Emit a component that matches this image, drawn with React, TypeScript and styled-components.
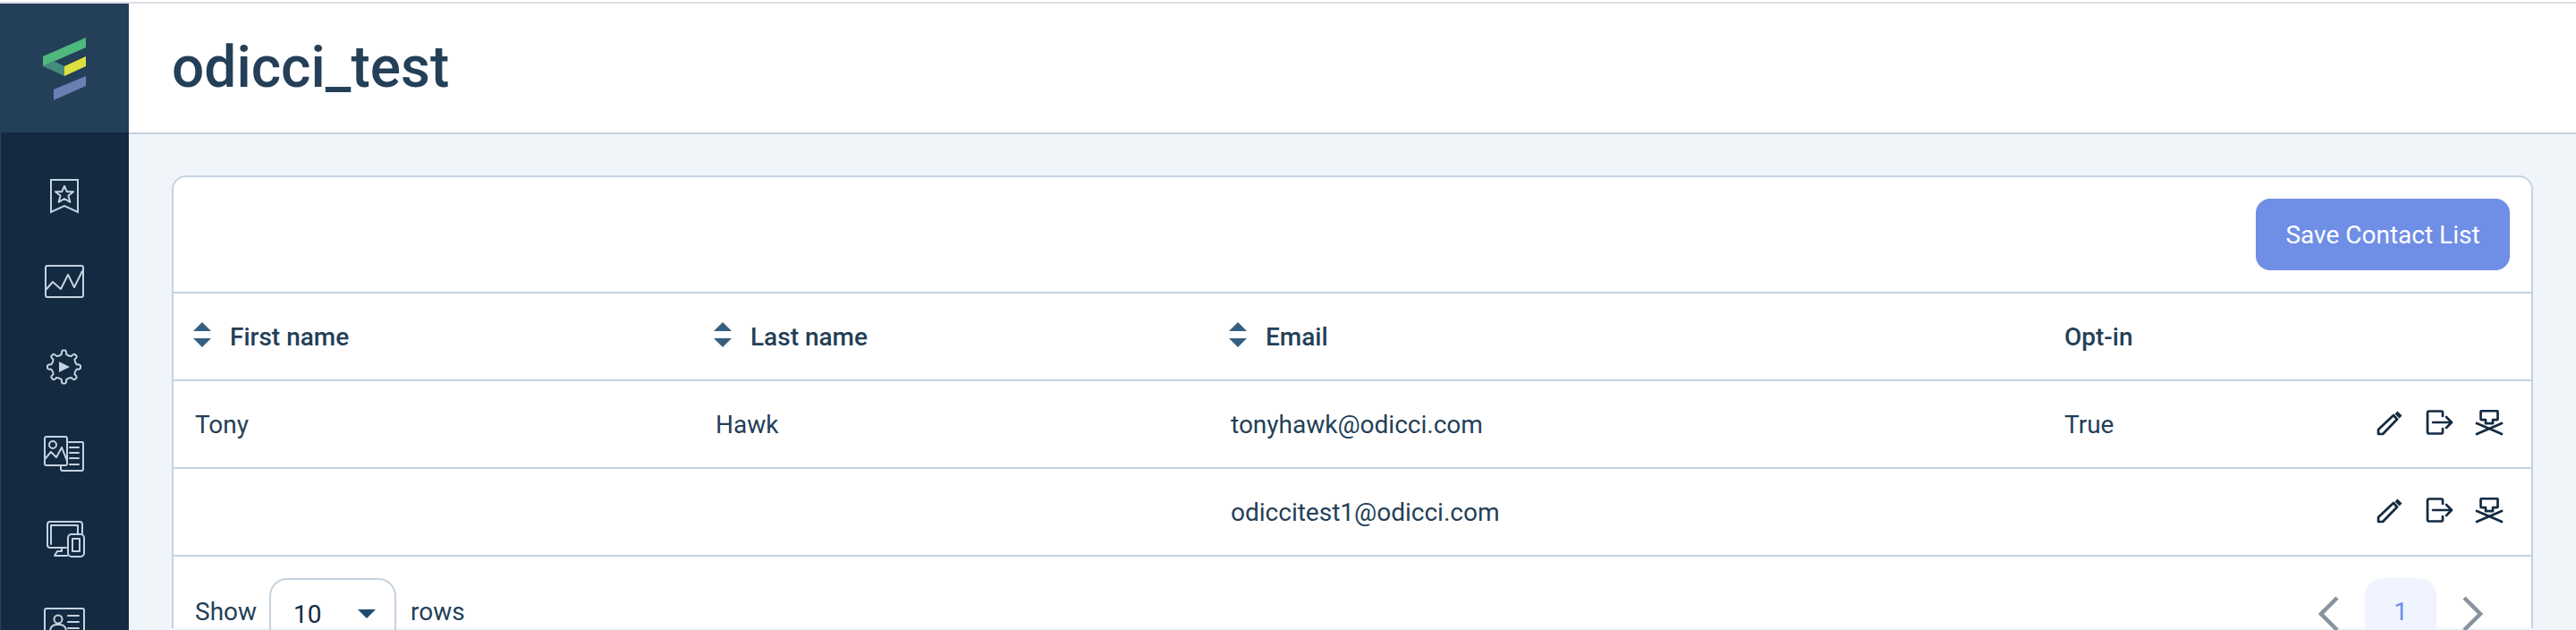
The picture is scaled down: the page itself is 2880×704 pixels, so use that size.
import React from "react";
import styled, { createGlobalStyle } from "styled-components";

const Global = createGlobalStyle`
  html, body { margin: 0; padding: 0; height: 704px; overflow: hidden; background: #f0f5fa; }
  * { box-sizing: border-box; }
  body { font-family: Roboto, "Liberation Sans", sans-serif; color: #243f58; }
`;
const Page = styled.div`
  height: 704px; overflow: hidden; display: flex; flex-direction: column;
`;
const TopLine = styled.div`height: 4px; background: linear-gradient(#fff 0 2px, #dcdde4 2px); flex: none;`;
const Body = styled.div`flex: 1; display: flex; min-height: 0;`;
const Sidebar = styled.aside`
  width: 144px; flex: none; background: #132a41;
  display: flex; flex-direction: column; overflow: hidden;
  box-shadow: inset 1px 0 0 #2a4259;
`;
const LogoBox = styled.div`
  height: 144px; flex: none; background: #243f58; display: flex; align-items: center; justify-content: center;
`;
const LogoMark = styled.svg`width: 48px; height: 70px; margin-top: 2px;`;
const NavList = styled.nav`
  display: flex; flex-direction: column; align-items: center; gap: 48px; padding-top: 46px;
`;
const NavIcon = styled.svg`
  width: 48px; height: 48px; flex: none; fill: none; stroke: #c5d2e0; stroke-width: 2;
  stroke-linejoin: round; stroke-linecap: round;
`;
const Main = styled.main`flex: 1; min-width: 0; display: flex; flex-direction: column;`;
const Header = styled.header`
  height: 146px; flex: none; background: #fff; border-bottom: 2px solid #c5d2e0;
  display: flex; align-items: center; padding-left: 48px;
`;
const Title = styled.h1`margin: 0; font-size: 64px; font-weight: 500; color: #243f58; line-height: 72px;`;
const Content = styled.div`flex: 1; padding: 46px 48px 0 48px; background: #f0f5fa;`;
const Card = styled.section`
  background: #fff; border: 2px solid #c5d2e0; border-radius: 16px 16px 0 0; border-bottom: none;
`;
const Toolbar = styled.div`
  height: 130px; display: flex; justify-content: flex-end; align-items: flex-start; padding: 24px 24px 0 0;
  border-bottom: 2px solid #c5d2e0;
`;
const SaveButton = styled.button`
  width: 284px; height: 80px; background: #6f8ee6; color: #fff; border: none; border-radius: 16px;
  font: 400 28px Roboto, sans-serif;
`;
const Row = styled.div`
  display: grid; grid-template-columns: 582px 576px 932px 1fr; height: 98px; align-items: center;
  border-bottom: 2px solid #c5d2e0; padding-left: 24px; font-size: 28px; color: #243f58;
`;
const HeadCell = styled.div<{ $sorted?: boolean }>`
  display: flex; align-items: center; gap: 21px; font-weight: 500; font-size: 28px;
  margin-left: ${p => (p.$sorted ? -2 : 0)}px;
`;
const BodyCell = styled.div``;
const Actions = styled.div`
  display: flex; justify-content: flex-end; align-items: center; gap: 24px; padding-right: 31px;
`;
const ActionsRowCell = styled.div`display: grid; grid-template-columns: 1fr auto; align-items: center;`;
const Footer = styled.div`display: flex; justify-content: space-between; padding: 24px 54px 0 24px; height: 80px;`;
const RowsPicker = styled.div`display: flex; align-items: flex-start; gap: 16px; font-size: 28px;`;
const PickerLabel = styled.span`line-height: 76px; color: #243f58;`;
const Select = styled.div`
  width: 142px; height: 80px; border: 2px solid #c5d2e0; border-radius: 20px;
  display: flex; justify-content: space-between; align-items: center; padding: 0 21px 0 25px;
  font-size: 28px; color: #132a41; margin-left: -2px;
`;
const Caret = styled.span`
  width: 0; height: 0; border-left: 10px solid transparent; border-right: 10px solid transparent;
  border-top: 10px solid #1f4b6b;
`;
const Pager = styled.div`display: flex; align-items: flex-start; gap: 28px;`;
const PageNum = styled.div`
  width: 80px; height: 80px; background: #f0f4fe; border-radius: 20px; color: #6f8ee6;
  display: flex; align-items: center; justify-content: center; font-size: 28px; padding-bottom: 6px;
`;
const Chevron = styled.svg`
  width: 24px; height: 48px; margin-top: 16px; flex: none; fill: none; stroke: #87939e; stroke-width: 4.500;
`;

const Logo = () => (
  <LogoMark viewBox="0 0 48 70">
    <polygon points="0,21 48,0 48,11 0,32" fill="#4fb87c" />
    <polygon points="0,32 12,26.300 24,32 24,43" fill="#458c7c" />
    <polygon points="24,32 48,21 48,32 24,43" fill="#dbe03f" />
    <polygon points="12,58 48,43 48,54 12,70" fill="#6b7fb3" />
  </LogoMark>
);

const gearPath = (() => {
  const cx = 23.5, cy = 24, teeth = 8, ro = 18.5, ri = 14.5;
  const pt = (r: number, a: number) => `${(cx + r * Math.cos(a)).toFixed(2)} ${(cy + r * Math.sin(a)).toFixed(2)}`;
  let d = "";
  for (let i = 0; i < teeth; i++) {
    const s = (Math.PI * 2) / teeth;
    const a = i * s - Math.PI / 2;
    const w = s * 0.2;
    const v = s * 0.5;
    d += `${i === 0 ? "M" : "L"}${pt(ri, a - w * 1.15)} Q${pt(ro + 1, a - w)} ${pt(ro, a)} Q${pt(ro + 1, a + w)} ${pt(ri, a + w * 1.15)} Q${pt(ri - 1.5, a + v)} ${pt(ri, a + s - w * 1.15)} `;
  }
  return d + "Z";
})();

const IconBookmark = () => (
  <NavIcon viewBox="0 0 48 48">
    <path d="M9 7h30v36l-15-7-15 7z" strokeLinejoin="miter" />
    <path d="M24 14l2.800 6.200h7.200l-5.600 4.600 2 7-6.400-3.800-6.400 3.800 2-7-5.600-4.600h7.200z" />
  </NavIcon>
);
const IconChart = () => (
  <NavIcon viewBox="0 0 48 48">
    <rect x="3" y="7" width="42" height="35" rx="2" />
    <path d="M4 33l7-8 9 8 8-16 7 14 9-18" />
  </NavIcon>
);
const IconGear = () => (
  <NavIcon viewBox="0 0 48 48">
    <path d={gearPath} />
    <polygon points="18,18 30,24 18,30" fill="#c5d2e0" stroke="none" />
  </NavIcon>
);
const IconMedia = () => (
  <NavIcon viewBox="0 0 48 48">
    <rect x="2" y="6" width="25" height="32" rx="2" />
    <circle cx="11" cy="15" r="4" />
    <path d="M3 30l6-7 6 6 6-11 6 15" />
    <path d="M29 12h15a1 1 0 0 1 1 1v29a2 2 0 0 1-2 2H22a2 2 0 0 1-2-2v-4M30 18h10M30 24h10M30 30h10M30 37h10" />
  </NavIcon>
);
const IconDevices = () => (
  <NavIcon viewBox="0 0 48 48">
    <path d="M44 18V8a3 3 0 0 0-3-3H8a3 3 0 0 0-3 3v23a3 3 0 0 0 3 3h18M9 30V9h30v9M21 34v4h-5l-3 5h14" />
    <rect x="28" y="19" width="18" height="25" rx="4" />
    <rect x="33" y="24" width="8" height="14" />
  </NavIcon>
);
const IconContact = () => (
  <NavIcon viewBox="0 0 48 48">
    <rect x="2" y="6" width="44" height="36" rx="2" />
    <circle cx="17" cy="18" r="4.500" />
    <path d="M8 38v-7a7 7 0 0 1 7-7h4a7 7 0 0 1 7 7v7M28 14h12M28 21h12M28 28h12" />
  </NavIcon>
);

const ActionIcon = styled.svg`
  width: 32px; height: 32px; flex: none; fill: none; stroke: #132a41; stroke-width: 2.700;
  stroke-linejoin: round; stroke-linecap: round;
`;
const IconPencil = () => (
  <ActionIcon viewBox="0 0 32 32">
    <path d="M4 22L21 6l4 4.500L9 27H4z" />
    <path d="M24 3l5 5" strokeWidth={4} strokeLinecap="butt" />
  </ActionIcon>
);
const IconExit = () => (
  <ActionIcon viewBox="0 0 32 32">
    <path d="M20 7V3a1.500 1.500 0 0 0-1.500-1.500H4.500A1.500 1.500 0 0 0 3 3v22a1.500 1.500 0 0 0 1.500 1.500h14A1.500 1.500 0 0 0 20 25v-4" />
    <path d="M9 14h20M24 8l6 6-6 6" />
  </ActionIcon>
);
const IconChair = () => (
  <ActionIcon viewBox="0 0 32 32">
    <path d="M7.500 1.200h17a1 1 0 0 1 1 1v8a1 1 0 0 1-1 1h-4.500v4h-8v-4H7.500a1 1 0 0 1-1-1v-8a1 1 0 0 1 1-1z" />
    <path d="M2 27L30 15M2 15l28 12" />
  </ActionIcon>
);

const SortWrap = styled.svg`width: 20px; height: 28px; flex: none; margin-top: -4px;`;
const Sort = () => (
  <SortWrap viewBox="0 0 20 28">
    <polygon points="10,0 20,10 0,10" fill="#365f7f" />
    <polygon points="10,28 20,18 0,18" fill="#365f7f" />
  </SortWrap>
);

const RowActions = () => (
  <Actions>
    <IconPencil />
    <IconExit />
    <IconChair />
  </Actions>
);

export default function App() {
  return (
    <>
      <Global />
      <Page>
        <TopLine />
        <Body>
          <Sidebar>
            <LogoBox><Logo /></LogoBox>
            <NavList>
              <IconBookmark />
              <IconChart />
              <IconGear />
              <IconMedia />
              <IconDevices />
              <IconContact />
            </NavList>
          </Sidebar>
          <Main>
            <Header><Title>odicci_test</Title></Header>
            <Content>
              <Card>
                <Toolbar><SaveButton>Save Contact List</SaveButton></Toolbar>
                <Row>
                  <HeadCell $sorted><Sort />First name</HeadCell>
                  <HeadCell $sorted><Sort />Last name</HeadCell>
                  <HeadCell $sorted><Sort />Email</HeadCell>
                  <HeadCell>Opt-in</HeadCell>
                </Row>
                <Row>
                  <BodyCell>Tony</BodyCell>
                  <BodyCell>Hawk</BodyCell>
                  <BodyCell>tonyhawk@odicci.com</BodyCell>
                  <ActionsRowCell><BodyCell>True</BodyCell><RowActions /></ActionsRowCell>
                </Row>
                <Row>
                  <BodyCell />
                  <BodyCell />
                  <BodyCell>odiccitest1@odicci.com</BodyCell>
                  <ActionsRowCell><BodyCell /><RowActions /></ActionsRowCell>
                </Row>
                <Footer>
                  <RowsPicker>
                    <PickerLabel>Show</PickerLabel>
                    <Select>10<Caret /></Select>
                    <PickerLabel>rows</PickerLabel>
                  </RowsPicker>
                  <Pager>
                    <Chevron viewBox="0 0 24 48"><path d="M21 6L3 24l18 18" /></Chevron>
                    <PageNum>1</PageNum>
                    <Chevron viewBox="0 0 24 48"><path d="M3 6l18 18L3 42" /></Chevron>
                  </Pager>
                </Footer>
              </Card>
            </Content>
          </Main>
        </Body>
      </Page>
    </>
  );
}
